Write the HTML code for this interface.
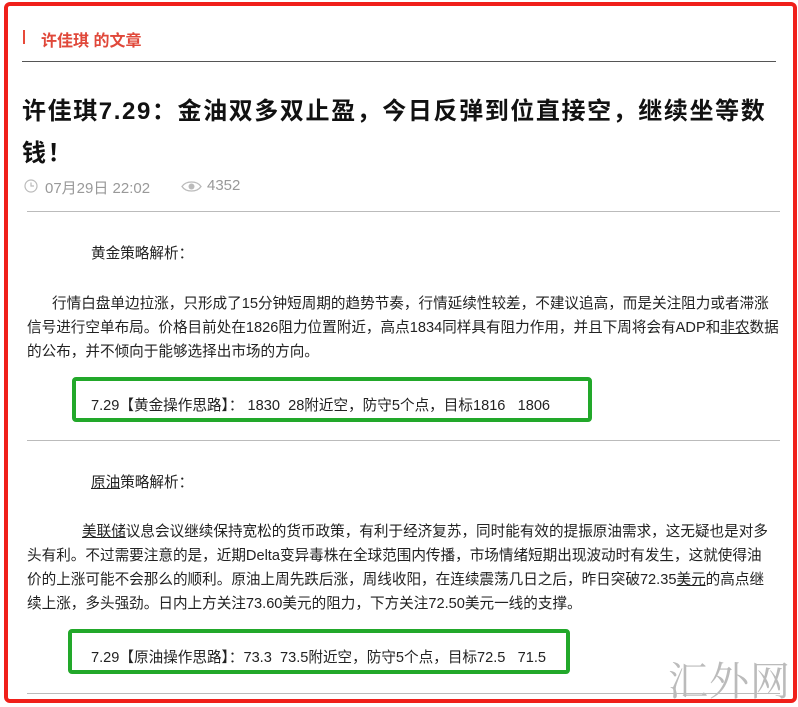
<!DOCTYPE html><html><head><meta charset="utf-8"><style>
body{margin:0;width:798px;height:704px;background:#fff;font-family:"Liberation Sans","Noto Sans CJK SC",sans-serif;position:relative;overflow:hidden;color:#222}
.a{position:absolute;white-space:nowrap}
.frame{position:absolute;left:4px;top:2px;width:785px;height:693px;border:4px solid #f0201a;border-radius:6px}
.hr{position:absolute;height:1px;background:#bbb}
.g{position:absolute;border:4px solid #22a82a;border-radius:4px}
p{margin:0}
.t{font-size:14.6px;color:#222}
u{text-decoration:underline}
</style></head><body>
<div class="frame"></div>
<div class="a" style="left:23px;top:30px;width:2px;height:14px;background:#e84a3a"></div>
<div class="a" style="left:41px;top:27px;font-size:16px;font-weight:bold;color:#e0483a">许佳琪 的文章</div>
<div class="hr" style="left:22px;top:61px;width:754px;background:#555"></div>
<div class="a" style="left:22px;top:91px;font-size:24px;font-weight:bold;color:#111;line-height:42px;white-space:normal;width:760px;letter-spacing:1.6px">许佳琪7.29：金油双多双止盈，今日反弹到位直接空，继续坐等数钱！</div>
<svg class="a" style="left:24px;top:179px" width="14" height="14" viewBox="0 0 14 14"><circle cx="7" cy="7" r="6" fill="none" stroke="#bbb" stroke-width="1.2"/><path d="M7 3.5V7h3" fill="none" stroke="#bbb" stroke-width="1.2"/></svg>
<div class="a" style="left:45px;top:177px;font-size:15px;color:#999">07月29日 22:02</div>
<svg class="a" style="left:181px;top:180px" width="21" height="13" viewBox="0 0 21 13"><path d="M1 6.5C5 0.5 16 0.5 20 6.5C16 12.5 5 12.5 1 6.5Z" fill="none" stroke="#bbb" stroke-width="1.3"/><circle cx="10.5" cy="6.5" r="3" fill="#bbb"/></svg>
<div class="a" style="left:207px;top:177px;font-size:15px;color:#999">4352</div>
<div class="hr" style="left:27px;top:211px;width:753px"></div>
<div class="a t" style="left:91px;top:242px">黄金策略解析：</div>
<div class="a t" style="left:27px;top:292px;white-space:normal;width:752px;line-height:24px"><span style="display:inline-block;width:25px"></span>行情白盘单边拉涨，只形成了15分钟短周期的趋势节奏，行情延续性较差，不建议追高，而是关注阻力或者滞涨信号进行空单布局。价格目前处在1826阻力位置附近，高点1834同样具有阻力作用，并且下周将会有ADP和<u>非农</u>数据的公布，并不倾向于能够选择出市场的方向。</div>
<div class="g" style="left:72px;top:377px;width:512px;height:37px"></div>
<div class="a t" style="left:91px;top:394px">7.29【黄金操作思路】： 1830&nbsp; 28附近空，防守5个点，目标1816&nbsp;&nbsp; 1806</div>
<div class="hr" style="left:27px;top:440px;width:753px"></div>
<div class="a t" style="left:91px;top:471px"><u>原油</u>策略解析：</div>
<div class="a t" style="left:27px;top:520px;white-space:normal;width:746px;line-height:24px"><span style="display:inline-block;width:55px"></span><u>美联储</u>议息会议继续保持宽松的货币政策，有利于经济复苏，同时能有效的提振原油需求，这无疑也是对多头有利。不过需要注意的是，近期Delta变异毒株在全球范围内传播，市场情绪短期出现波动时有发生，这就使得油价的上涨可能不会那么的顺利。原油上周先跌后涨，周线收阳，在连续震荡几日之后，昨日突破72.35<u>美元</u>的高点继续上涨，多头强劲。日内上方关注73.60美元的阻力，下方关注72.50美元一线的支撑。</div>
<div class="g" style="left:68px;top:629px;width:494px;height:37px"></div>
<div class="a t" style="left:91px;top:646px">7.29【原油操作思路】：73.3&nbsp; 73.5附近空，防守5个点，目标72.5&nbsp;&nbsp; 71.5</div>
<div class="hr" style="left:27px;top:693px;width:753px"></div>
<div class="a" style="left:668px;top:650px;font-size:40px;color:#bbb;font-family:'Noto Serif CJK SC',serif;letter-spacing:1px">汇外网</div>
</body></html>
